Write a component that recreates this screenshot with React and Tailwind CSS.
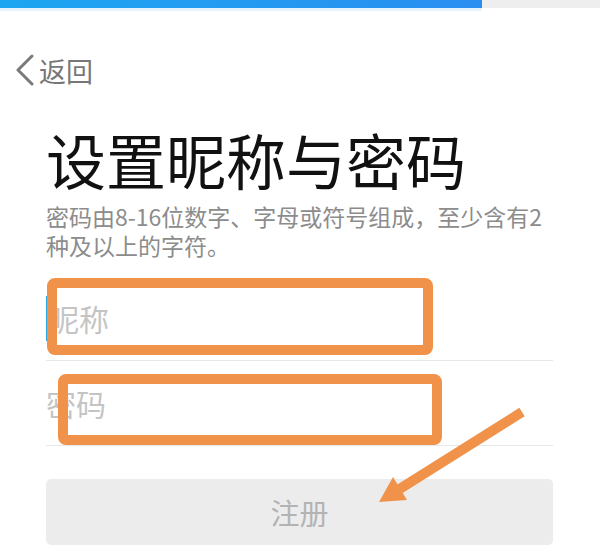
export default function App() {
  const font = { fontFamily: '"Noto Sans CJK SC", "Noto Sans", sans-serif' };
  return (
    <div className="relative w-[600px] h-[555px] overflow-hidden bg-white" style={font}>
      {/* progress bar */}
      <div className="flex h-[8px] w-full">
        <div className="h-full w-[482px] bg-gradient-to-r from-[#1ca6f1] to-[#2a8ef1]" />
        <div className="h-full flex-1 bg-[#eeeeee]" />
      </div>
      <div className="h-[3px] w-[482px] bg-[#e6f4fd]" />

      {/* back */}
      <div className="mt-[41px] flex h-[36px] items-center pl-[15px] text-[#777777]">
        <svg width="20" height="32" viewBox="0 0 20 32" className="shrink-0">
          <path d="M17 2 L3 16 L17 30" fill="none" stroke="#7a7a7a" strokeWidth="3" strokeLinecap="round" strokeLinejoin="round" />
        </svg>
        <span className="ml-[4px] text-[27px] leading-none">返回</span>
      </div>

      <div className="pl-[46px] pr-[47px]">
        {/* title */}
        <h1 className="mt-[41px] text-[60px] leading-none font-normal text-[#111111] whitespace-nowrap">设置昵称与密码</h1>
        {/* subtitle */}
        <p className="mt-[13px] text-[23px] leading-[29px] text-[#8c8c8c]">
          密码由8-16位数字、字母或符号组成，至少含有2种及以上的字符。
        </p>

        {/* inputs */}
        <div className="mt-[16px]">
          <div className="relative flex h-[85px] items-center border-b border-[#e8e8e8]">
            <span className="absolute left-0 top-[20px] h-[45px] w-[2px] bg-[#2aa8e4]" />
            <span className="pl-[3px] text-[30px] leading-none text-[#c4c4c4]">昵称</span>
          </div>
          <div className="flex h-[85px] items-center border-b border-[#e8e8e8]">
            <span className="text-[30px] leading-none text-[#c4c4c4]">密码</span>
          </div>
        </div>

        {/* button */}
        <div className="mt-[33px] flex h-[66px] items-center justify-center rounded-[5px] bg-[#ececed]">
          <span className="text-[29px] leading-none text-[#b3b3b3]">注册</span>
        </div>
      </div>

      {/* annotation overlay */}
      <svg className="pointer-events-none absolute inset-0" width="600" height="555" viewBox="0 0 600 555">
        <rect x="52" y="283" width="376" height="67" rx="3" fill="none" stroke="#f0924a" strokeWidth="10" />
        <rect x="63" y="379" width="374" height="61" rx="3" fill="none" stroke="#f0924a" strokeWidth="10" />
        <line x1="522" y1="412" x2="398" y2="490" stroke="#f0924a" strokeWidth="10" strokeLinecap="butt" />
        <polygon points="379,502 393,477 407,500" fill="#f0924a" />
      </svg>
    </div>
  );
}
